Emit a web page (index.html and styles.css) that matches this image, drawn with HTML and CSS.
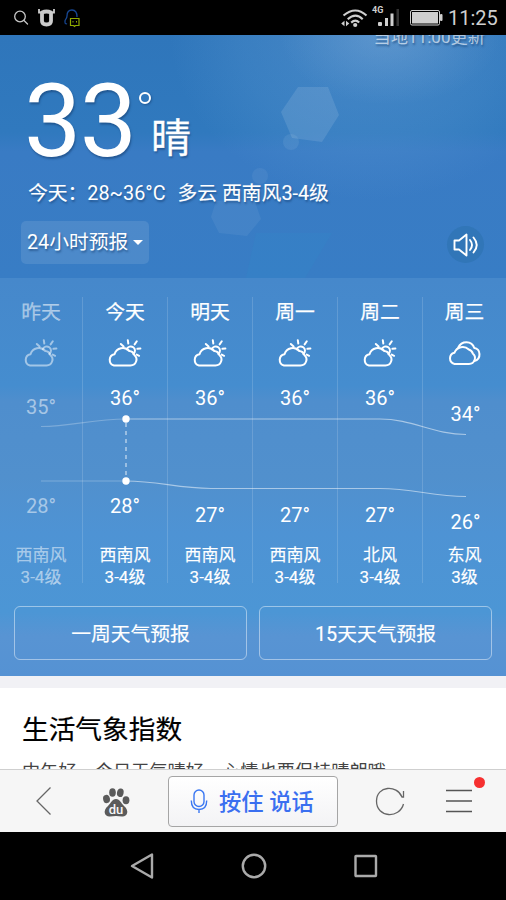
FILE: index.html
```html
<!DOCTYPE html>
<html lang="zh-CN">
<head>
<meta charset="utf-8">
<title>天气预报</title>
<link rel="stylesheet" href="styles.css">
</head>
<body>
<svg class="defs" width="0" height="0">
  <symbol id="cloud-sun" viewBox="0 0 36 30">
    <g fill="none" stroke="currentColor" stroke-width="2" stroke-linecap="round" stroke-linejoin="round">
      <path d="M8 27.500H24.500a6 6 0 0 0 3.800-10.600 5.800 5.800 0 0 0-5-3.900 8.700 8.700 0 0 0-14.800 3.200 5.800 5.800 0 0 0-.5 11.300Z"/>
      <path d="M20.800 11.300a4.200 4.200 0 1 1 6.500 4.700"/>
      <path d="M14.800 6l2.800 2.600M21.800 2.200l.5 3.300M30.800 3.200l-2.200 3.200M31.400 10.800l3-.3M30.700 16.600l2.400 1.200"/>
    </g>
  </symbol>
  <symbol id="clouds" viewBox="0 0 36 30">
    <g fill="none" stroke="currentColor" stroke-width="2" stroke-linecap="round" stroke-linejoin="round">
      <path d="M8.500 26H23a6 6 0 0 0 3.800-10.600 5.800 5.800 0 0 0-4-3.900 8.700 8.700 0 0 0-14.300 3.200 5.800 5.800 0 0 0 0 11.300Z"/>
      <path d="M12.300 9.500c3-7 13.500-7.500 16 .5 6.300.5 7.500 11 0 13"/>
    </g>
  </symbol>
</svg>
<div class="phone">
  <header class="status">
    <svg class="status-left" width="70" height="24" viewBox="0 0 70 24" fill="none">
      <g stroke="#c8c8c8" stroke-width="1.300" stroke-linecap="round"><circle cx="8" cy="11.500" r="5.300"/><path d="M12 15.500l3.500 3.500"/></g>
      <path d="M30 7.500q4.500-2 9 0v8.500q0 3.500-4.500 3.500t-4.500-3.500Z" stroke="#ccc" stroke-width="3.800" stroke-linejoin="round"/>
      <path d="M27 4v3.500h3M42 4v3.500h-3" stroke="#ccc" stroke-width="1.800"/>
      <path d="M55 19c-2-1-2 1-2-3 0-2 2-2 2-5 0-4 2-6 5-6 4 0 5 3 5 7" stroke="#174894" stroke-width="1.300"/>
      <path d="M58.500 13.500h8.500v7h-3.500l-1 1-1-1h-3Z" stroke="#8fa900" stroke-width="1.200"/>
      <path d="M61 16v1.500M64.500 16v1.500" stroke="#8fa900"/>
    </svg>
    <div class="status-right">
      <svg width="109" height="26" viewBox="0 0 109 26" fill="none">
        <g stroke="#cfcfcf" stroke-width="2.100"><path d="M4.500 10.500q12-10 23 0M8.700 14.200q8-7 15 0M12.200 17.600q4.200-3.800 8 0"/></g>
        <circle cx="16.200" cy="20" r="2.100" fill="#cfcfcf"/>
        <path d="M5.500 15.800v5.400l-3.300-2.700ZM7 15.800v5.400l3.300-2.700Z" fill="#cfcfcf"/>
        <g fill="#cfcfcf"><rect x="39" y="17" width="4" height="4" rx="1"/><rect x="46" y="13" width="3" height="8"/><rect x="51.500" y="8.500" width="3" height="12.500"/><rect x="57.500" y="4" width="2.500" height="17" fill="#333"/></g>
        <rect x="71.500" y="5.500" width="29" height="14.500" rx="1.500" stroke="#cfcfcf"/><rect x="73" y="7" width="26" height="11.500" fill="#cfcfcf"/><rect x="101" y="9" width="2.500" height="7" rx="1" fill="#cfcfcf"/>
      </svg>
      <span class="net">4G</span>
      <span class="clock">11:25</span>
    </div>
  </header>

  <main class="page">
    <section class="weather">
      <svg class="flare" width="506" height="243" viewBox="0 0 506 243">
        <path d="M298 52l30 0 11 28-17 27-30-4-11-26Z" fill="#fff" opacity=".11"/>
        <circle cx="291" cy="107" r="8" fill="#fff" opacity=".07"/>
        <circle cx="260" cy="141" r="8" fill="#fff" opacity=".06"/>
        <path d="M216 166l38-2 7 20-14 17-28-3-8-16Z" fill="#fff" opacity=".06"/>
        <path d="M256 198H332L305 243H246Z" fill="#269bd0" opacity=".12"/>
      </svg>
      <div class="now">
        <p class="updated">当地11:00更新</p>
        <div class="reading">
          <span class="big">33</span><span class="deg"></span><span class="cond">晴</span>
        </div>
        <p class="today"><span>今天：</span><span class="range">28~36°C</span><span>多云 西南风3-4级</span></p>
        <div class="actions">
          <button class="hours">24小时预报<i class="caret"></i></button>
          <button class="speak" aria-label="语音播报">
            <svg width="26" height="26" viewBox="0 0 26 26" fill="none" stroke="#fff" stroke-width="1.900" stroke-linecap="round" stroke-linejoin="round"><path d="M1.500 8.500h4.500l7.500-6v21l-7.500-6H1.500Z"/><path d="M17 8q4 5 0 10M20.500 5.500q6.500 7.500 0 15"/></svg>
          </button>
        </div>
      </div>
      <div class="forecast">
        <div class="days">
          <div class="day past"><b>昨天</b><svg class="wi"><use href="#cloud-sun"/></svg><span class="hi drop-s">35°</span><span class="lo">28°</span><span class="wind">西南风<br>3-4级</span></div>
          <div class="day"><b>今天</b><svg class="wi"><use href="#cloud-sun"/></svg><span class="hi">36°</span><span class="lo">28°</span><span class="wind">西南风<br>3-4级</span></div>
          <div class="day"><b>明天</b><svg class="wi"><use href="#cloud-sun"/></svg><span class="hi">36°</span><span class="lo drop-s">27°</span><span class="wind">西南风<br>3-4级</span></div>
          <div class="day"><b>周一</b><svg class="wi"><use href="#cloud-sun"/></svg><span class="hi">36°</span><span class="lo drop-s">27°</span><span class="wind">西南风<br>3-4级</span></div>
          <div class="day"><b>周二</b><svg class="wi"><use href="#cloud-sun"/></svg><span class="hi">36°</span><span class="lo drop-s">27°</span><span class="wind">北风<br>3-4级</span></div>
          <div class="day"><b>周三</b><svg class="wi"><use href="#clouds"/></svg><span class="hi drop-l">34°</span><span class="lo drop-l">26°</span><span class="wind">东风<br>3级</span></div>
          <svg class="chart" width="506" height="110" viewBox="0 0 506 110" fill="none">
            <g stroke="#fff" stroke-width="1.200">
              <path d="M41 26.500C72 26.500 92 19 126 19M41 81H126" opacity=".25"/>
              <path d="M126 19H380C412 19 434 34.500 466 34.500M126 81C158 81 178 88.500 211 88.500H380C414 88.500 432 96.500 466 96.500" opacity=".5"/>
              <path d="M126 23v54" stroke-dasharray="4 4" opacity=".7"/>
            </g>
            <circle cx="126" cy="19" r="3.700" fill="#fff"/><circle cx="126" cy="81" r="3.700" fill="#fff"/>
          </svg>
        </div>
        <div class="links"><a>一周天气预报</a><a>15天天气预报</a></div>
      </div>
    </section>
    <section class="life">
      <h2>生活气象指数</h2>
      <p>中午好，今日天气晴好，心情也要保持晴朗哦</p>
    </section>
  </main>

  <footer class="toolbar">
    <svg class="back" width="18" height="30" viewBox="0 0 18 30" fill="none" stroke="#666" stroke-width="1.300"><path d="M15.500 1.500L2 15l13.500 13.500"/></svg>
    <svg class="paw" width="28" height="30" viewBox="0 0 28 30">
      <g fill="#5b5b5b"><ellipse cx="4.500" cy="12" rx="3.400" ry="4.200" transform="rotate(-12 4.500 12)"/><ellipse cx="10.500" cy="5.500" rx="3.300" ry="4.300"/><ellipse cx="18.300" cy="5.800" rx="3.300" ry="4.300" transform="rotate(12 18.300 5.800)"/><ellipse cx="24" cy="13.200" rx="3.400" ry="4"/>
      <path d="M14 12c4 0 5 4 8 7 6 5 3 11-2 10.500-4-.7-8-.7-12 0-5 .5-8-5.500-2-10.500 3-3 4-7 8-7Z"/></g>
      <text x="14" y="26.500" class="du">du</text>
    </svg>
    <button class="talk">
      <svg width="18" height="26" viewBox="0 0 18 26" fill="none" stroke="#3a77f2" stroke-width="1.400"><rect x="4" y="2" width="10" height="16.500" rx="5"/><path d="M1.300 12.500q0 9 7.700 9t7.700-9M9 21.500v3.500"/></svg>
      <span>按住 说话</span>
    </button>
    <svg class="reload" width="30" height="30" viewBox="0 0 30 30" fill="none" stroke="#666" stroke-width="1.300"><path d="M28.500 5V11H27C22-1.500 1.500-.5 1.500 15c0 17 23 18 27 3"/></svg>
    <div class="menu"><svg width="28" height="26" viewBox="0 0 28 26" stroke="#555" stroke-width="1.400"><path d="M1 2.500h26M1 13h26M1 23.500h26"/></svg><i class="dot"></i></div>
  </footer>
  <nav class="keys">
    <svg width="24" height="28" viewBox="0 0 24 28"><path d="M22 2.500v23L2 14Z"/></svg>
    <svg width="28" height="28" viewBox="0 0 28 28"><circle cx="14" cy="14" r="11.200"/></svg>
    <svg width="24" height="28" viewBox="0 0 24 28"><rect x="1.500" y="4" width="20.500" height="20" rx=".5"/></svg>
  </nav>
</div>
</body>
</html>
```
FILE: styles.css
```css
* { box-sizing: border-box; margin: 0; padding: 0; }
body { font-family: Roboto, "Noto Sans CJK SC", sans-serif; }
button { border: 0; background: none; font: inherit; color: inherit; }
i { font-style: normal; }
.defs { position: absolute; }
.phone { width: 506px; height: 900px; display: flex; flex-direction: column; overflow: hidden; background: #000; }

.status { height: 35px; flex: none; display: flex; justify-content: space-between; padding: 5px 7px 0 12px; color: #cfcfcf; }
.status-right { position: relative; display: flex; }
.net { position: absolute; left: 33px; top: 0; font-size: 9px; line-height: 10px; font-weight: 700; }
.clock { font-size: 20px; line-height: 27px; width: 51px; }

.page { height: 734px; flex: none; overflow: hidden; background: #fff; }
.weather { position: relative; color: #fff; }
.flare { position: absolute; left: 0; top: 0; }
.now {
  height: 243px;
  background:
    radial-gradient(ellipse 110px 70px at 390px 0, rgba(140, 180, 220, .3), transparent),
    radial-gradient(ellipse 200px 165px at 370px 0, rgba(105, 160, 215, .42), rgba(100, 160, 215, .2) 65%, transparent),
    linear-gradient(#2f76bb, #3079be 40%, #397bc4 48%, #387dc5);
}
.now > * { text-shadow: 1px 2px 2px rgba(20, 60, 110, .55); }
.updated { height: 30px; padding-right: 21px; text-align: right; font-size: 17.200px; line-height: 5px; color: rgba(255, 255, 255, .62); }
.reading { position: relative; height: 109px; display: flex; align-items: flex-start; padding-left: 24px; }
.big { width: 115px; font-size: 102px; line-height: 112px; height: 109px; letter-spacing: -1.500px; }
.deg { width: 12px; height: 12px; margin: 27px 0 0 0; border: 2.500px solid #fff; border-radius: 50%; box-shadow: 1px 1px 2px rgba(20, 60, 110, .5); }
.cond { margin: 49px 0 0 0; font-size: 40px; line-height: 50px; -webkit-text-stroke: .3px #fff; }
.today { position: relative; height: 38px; padding-left: 28px; display: flex; font-size: 19.800px; line-height: 40px; white-space: pre; -webkit-text-stroke: .15px #fff; }
.range { margin-right: 12px; -webkit-text-stroke: 0; }
.actions { position: relative; display: flex; justify-content: space-between; align-items: center; height: 43px; margin: 9px 22px 0 21px; }
.hours { display: flex; align-items: center; width: 128px; height: 43px; padding-left: 6px; border-radius: 5px; background: rgba(255, 255, 255, .1); font-size: 19.800px; line-height: 42px; white-space: nowrap; text-shadow: inherit; }
.caret { margin-left: 5px; border: 5px solid transparent; border-top-color: #fff; border-bottom-width: 0; }
.speak { display: flex; align-items: center; justify-content: center; width: 37px; height: 37px; margin-top: 4px; border-radius: 50%; background: #3176b8; }

.forecast { height: 398px; background: linear-gradient(#4688cb 0, #458dcf 27%, #4f8ecd 31%, #5190cd 50%, #4e93d4 64%, #4c96d5 84%, #5894d3 90%, #5592d3 100%); }
.days { position: relative; display: grid; grid-template-columns: 83px repeat(4, 85px) 83px; height: 328px; }
.day { height: 286px; margin-top: 19px; display: grid; grid-template-rows: 32px 50px 38px 90px 32px 44px; justify-items: center; border-right: 1px solid rgba(255, 255, 255, .15); text-align: center; }
.day:nth-child(6) { border: 0; }
.past { color: rgba(255, 255, 255, .5); }
.day b { font-weight: 400; font-size: 19.800px; line-height: 31px; -webkit-text-stroke: .25px currentColor; }
.wi { width: 36px; height: 30px; margin: 9px 2px 0 0; }
.hi, .lo { height: 28px; font-size: 20px; line-height: 28px; }
.hi { grid-row: 3; margin-top: 5px; }
.lo { grid-row: 4; margin-top: 75px; }
.wind { grid-row: 6; margin-top: 5px; font-size: 17px; line-height: 22px; -webkit-text-stroke: .15px currentColor; }
.drop-s { transform: translateY(9px); }
.drop-l { transform: translate(1px, 16px); }
.chart { position: absolute; left: 0; top: 122px; }
.links { display: flex; gap: 12px; padding: 0 14px; }
.links a { flex: 1; height: 54px; border: 1px solid rgba(255, 255, 255, .45); border-radius: 6px; text-align: center; font-size: 19.800px; line-height: 55px; -webkit-text-stroke: .15px #fff; }

.life { border-top: 12px solid #f1f1f5; padding: 20px 22px 0; white-space: nowrap; color: #000; }
.life h2 { font-size: 26.700px; line-height: 45px; font-weight: 400; -webkit-text-stroke: .2px #000; }
.life p { margin-top: 4px; font-size: 18.200px; line-height: 30px; color: #444; }

.toolbar { height: 63px; flex: none; display: flex; align-items: center; background: #f6f6f6; border-top: 1px solid #cfcfcf; }
.back { margin-left: 35px; }
.paw { margin: 2px 0 0 49px; }
.du { font: 500 13px Roboto, sans-serif; fill: #f6f6f6; text-anchor: middle; }
.talk { display: flex; align-items: center; gap: 11px; width: 170px; height: 51px; margin-left: 38px; padding-left: 21px; border: 1px solid #a5a5a5; border-radius: 4px; background: linear-gradient(#fff, #f3f3f5); color: #3a6ff0; font-size: 22.300px; line-height: 51px; font-weight: 500; white-space: nowrap; }
.talk span { padding-top: 3px; }
.reload { margin-left: 37px; }
.menu { position: relative; display: flex; margin-left: 40px; }
.dot { position: absolute; left: 29px; top: -11px; width: 11px; height: 11px; border-radius: 50%; background: #f63030; }
.keys { height: 68px; display: flex; align-items: center; padding-left: 130px; gap: 86px; }
.keys svg { fill: none; stroke: #aaa; stroke-width: 2.400; stroke-linejoin: round; }
```
